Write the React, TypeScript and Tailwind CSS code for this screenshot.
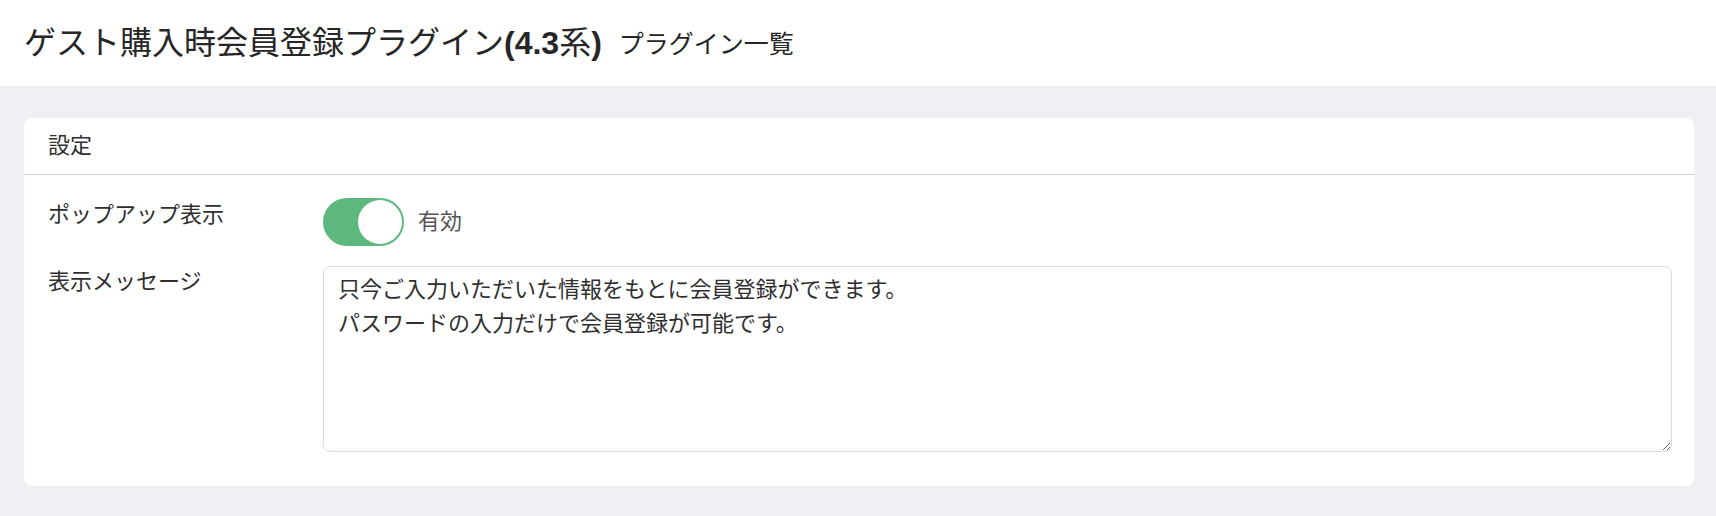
const font = '[font-family:"Liberation_Sans","Noto_Sans_CJK_JP",sans-serif]';

const Toggle = () => {
  return (
    <div className="flex h-[48px] w-[81px] items-center justify-end rounded-full bg-[#5cb87c] p-[2px]">
      <div className="h-[44px] w-[44px] rounded-full bg-white" />
    </div>
  );
};

const App = () => {
  return (
    <div className={`min-h-[516px] w-full bg-[#eef0f4] text-[#2f2f2f] ${font}`}>
      <header className="flex h-[86px] items-center gap-[17px] bg-white px-[24px]">
        <h1 className="text-[32px] font-normal leading-[40px] text-[#262626]">
          ゲスト購入時会員登録プラグイン
          <span className="font-semibold">(4.3</span>系
          <span className="font-semibold">)</span>
        </h1>
        <span className="pt-[2px] text-[25px] leading-[32px] text-[#262626]">
          プラグイン一覧
        </span>
      </header>

      <main className="pt-[32px] pr-[22px] pb-[30px] pl-[24px]">
        <section className="rounded-[8px] bg-white">
          <div className="flex h-[57px] items-center border-b border-[#d3d3d6] px-[24px]">
            <h2 className="text-[22px] leading-[32px] font-normal">設定</h2>
          </div>
          <div className="flex flex-col gap-[20px] pt-[23px] pr-[22px] pb-[34px] pl-[24px]">
            <div className="flex">
              <label className="w-[275px] shrink-0 pt-[1px] text-[22px] leading-[32px]">
                ポップアップ表示
              </label>
              <div className="flex items-center gap-[14px]">
                <Toggle />
                <span className="text-[22px] leading-[32px] text-[#555]">有効</span>
              </div>
            </div>
            <div className="flex">
              <label className="w-[275px] shrink-0 text-[22px] leading-[32px]">
                表示メッセージ
              </label>
              <textarea
                className={`h-[186px] flex-1 resize-y rounded-[7px] border border-[#dcdde2] px-[14px] pt-[6px] text-[22px] leading-[34px] text-[#2f2f2f] outline-none ${font}`}
                defaultValue={
                  '只今ご入力いただいた情報をもとに会員登録ができます。\nパスワードの入力だけで会員登録が可能です。'
                }
              />
            </div>
          </div>
        </section>
      </main>
    </div>
  );
};

export default App;
